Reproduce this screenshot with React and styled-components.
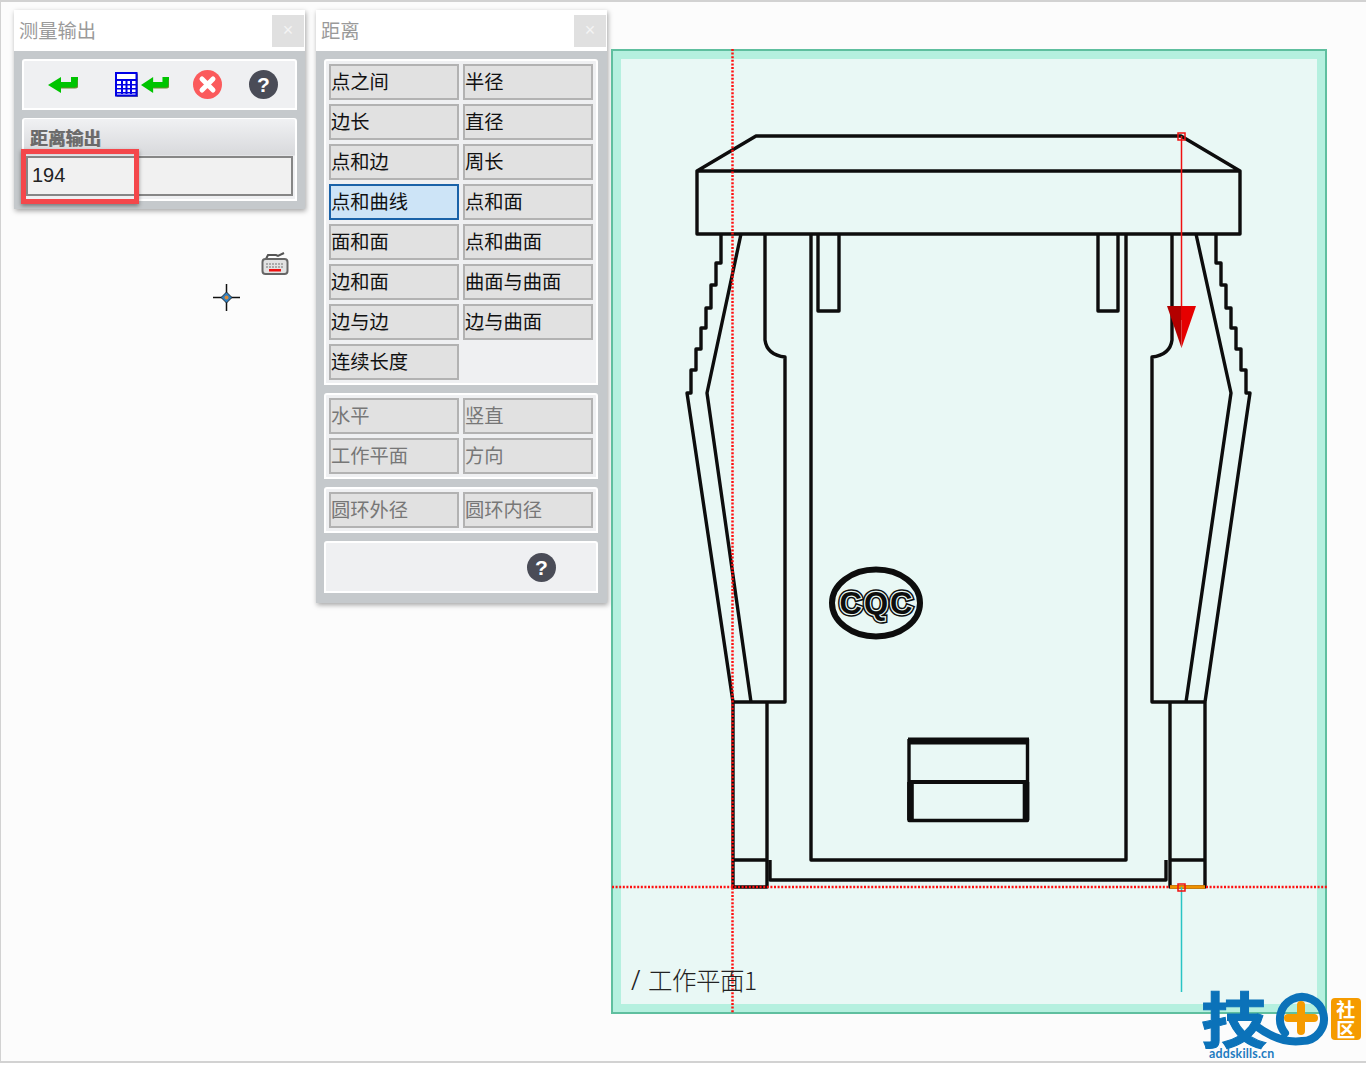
import React from "react";
import styled, { createGlobalStyle } from "styled-components";

const Global = createGlobalStyle`
  html, body { margin: 0; padding: 0; background: #fff; }
  body { font-family: "Noto Sans CJK SC", "Liberation Sans", sans-serif; }
  * { box-sizing: border-box; }
`;

const Page = styled.div`
  position: relative;
  width: 1366px;
  height: 1063px;
  background: #fcfcfc;
  border-top: 2px solid #d2d2d2;
  border-left: 1px solid #d2d2d2;
  border-bottom: 2px solid #d2d2d2;
  padding: 8px 0 0 13px;
  display: flex;
  align-items: flex-start;
  overflow: hidden;
`;
const Panel = styled.section`
  width: 291px;
  margin-right: ${(p) => p.$gap}px;
  background: #c5c9cc;
  box-shadow: 1px 2px 5px rgba(0, 0, 0, 0.35);
  position: relative;
`;
const PanelHeader = styled.header`
  height: 41px;
  background: #fff;
  display: flex;
  align-items: center;
  justify-content: space-between;
  padding: 0 1px 0 5px;
`;
const PanelTitle = styled.h2`
  margin: 0;
  font-size: 19.3px;
  line-height: 40px;
  height: 41px;
  font-weight: 400;
  color: #9a9a9a;
`;
const CloseButton = styled.button`
  width: 32px;
  height: 32px;
  border: 0;
  padding: 0;
  background: #e0e0e0;
  color: #f4f4f4;
  font: 400 18px "Liberation Sans", sans-serif;
`;
const PanelBody = styled.div`
  padding: 8px 8px ${(p) => p.$bottom || 8}px 8px;
  display: flex;
  flex-direction: column;
  gap: ${(p) => p.$gap || 8}px;
`;
const Card = styled.div`
  width: ${(p) => p.$width || 275}px;
  background: #eff0f2;
  border: 2px solid #fff;
  border-radius: 3px 3px 0 0;
`;
const ToolRow = styled(Card)`
  height: 51px;
  display: flex;
  align-items: center;
  padding-left: 24px;
`;
const ToolSlot = styled.span`
  display: flex;
  margin-right: ${(p) => p.$gap || 0}px;
`;
const GroupBox = styled(Card)`
  height: 83px;
  padding: 0 2px;
  border-top-width: 1px;
  background: linear-gradient(#f0f1f3 0, #d8d9dc 36px, #eff0f2 37px);
`;
const GroupTitle = styled.div`
  height: 37px;
  padding: 6px 0 0 4px;
  font-size: 17.8px;
  line-height: 24px;
  font-weight: 700;
  color: #6a6a6a;
  text-shadow: 0.6px 0 #8a8a8a;
`;
const ValueField = styled.div`
  height: 40px;
  width: 267px;
  border: 2px solid #868686;
  background: #f1f1f1;
  padding-left: 4px;
  font: 400 20px/34px "Liberation Sans", sans-serif;
  color: #222;
`;
const Highlight = styled.div`
  position: absolute;
  left: 7px;
  top: 139px;
  width: 118px;
  height: 55px;
  border: 5px solid #f4474b;
  box-shadow: 0 2px 4px rgba(0, 0, 0, 0.4);
`;
const ButtonGrid = styled(Card)`
  display: grid;
  grid-template-columns: 130px 130px;
  grid-auto-rows: 36px;
  gap: 4px;
  padding: 3px 0 2.5px 3px;
`;
const MeasureButton = styled.button`
  border: 2px solid ${(p) => (p.$active ? "#1a62a8" : "#b2b2b2")};
  background: ${(p) => (p.$active ? "#cde4f7" : "#e1e1e1")};
  color: ${(p) => (p.$disabled ? "#777" : "#111")};
  font: 400 19.3px/28px "Noto Sans CJK SC", sans-serif;
  text-align: left;
  padding: 0 0 2px 0;
  white-space: nowrap;
`;
const FooterCard = styled(Card)`
  height: 52px;
  display: flex;
  align-items: center;
  padding-left: 201px;
`;
const Canvas = styled.div`
  position: relative;
  margin-top: 39px;
  width: 716px;
  height: 965px;
  margin-left: -5px;
  border: 2px solid #5fbf9f;
  background: #b5f0df;
  padding: 8px 8px 8px 8px;
`;
const Viewport = styled.div`
  width: 100%;
  height: 100%;
  background: #e9f8f5;
`;
const Drawing = styled.svg`
  position: absolute;
  left: -2px;
  top: -2px;
  width: 716px;
  height: 965px;
`;
const CursorMark = styled.svg`
  position: absolute;
  left: 212px;
  top: 282px;
`;
const KeyboardMark = styled.svg`
  position: absolute;
  left: 259px;
  top: 247px;
`;
const Watermark = styled.div`
  position: absolute;
  left: 1199px;
  top: 984px;
  width: 165px;
  height: 76px;
`;
const LogoGlyph = styled.span`
  position: absolute;
  left: 1px;
  top: 3px;
  font: 700 60px/56px "Noto Sans CJK SC", sans-serif;
  color: #0b72b9;
  -webkit-text-stroke: 1px #0b72b9;
  transform: scaleX(1.1);
  transform-origin: left center;
`;
const LogoRing = styled.svg`
  position: absolute;
  left: 0;
  top: 0;
`;
const LogoBadge = styled.div`
  position: absolute;
  left: 131px;
  top: 12px;
  width: 29.5px;
  height: 42px;
  border-radius: 4px;
  background: #f59b00;
  color: #fff;
  font: 700 19px/20px "Noto Sans CJK SC", sans-serif;
  text-align: center;
  padding-top: 1px;
`;
const LogoUrl = styled.span`
  position: absolute;
  left: 9px;
  top: 61px;
  font: 700 12.4px/14px "Lato", "Liberation Sans", sans-serif;
  letter-spacing: 0.2px;
  color: #1e7bc0;
`;

const ReturnArrow = ({ width = 30 }) => (
  <svg width={width} height="18" viewBox="0 0 30 18" preserveAspectRatio="none">
    <path d="M0 9 L13 1 V6 H23 V1 H30 V9 Q30 12 27 12 H13 V17 Z" fill="#00c400" />
    <path d="M13 12 H27 Q30 12 30 9 V4" fill="none" stroke="#6f8a30" strokeWidth="1.2" />
  </svg>
);

const CalcIcon = () => (
  <svg width="23" height="25" viewBox="0 0 23 25">
    <rect x="1.500" y="1.500" width="21.500" height="23.500" fill="#777" />
    <rect x="1" y="1" width="20.500" height="22.500" fill="#fff" stroke="#0000e6" strokeWidth="2" />
    <g fill="#0000e6">
      <rect x="1" y="7" width="20" height="2" />
      <rect x="1" y="12" width="20" height="1.500" />
      <rect x="1" y="16" width="20" height="1.500" />
      <rect x="1" y="20" width="20" height="1.500" />
      <rect x="6" y="8" width="2" height="14" />
      <rect x="10.500" y="8" width="2" height="14" />
      <rect x="15" y="8" width="2" height="14" />
    </g>
  </svg>
);

const ErrorIcon = () => (
  <svg width="29" height="29" viewBox="0 0 29 29">
    <circle cx="14.500" cy="14.500" r="14.500" fill="#fb5a5c" />
    <path d="M9 9 L20 20 M20 9 L9 20" stroke="#fff" strokeWidth="5" strokeLinecap="round" />
  </svg>
);

const HelpIcon = () => (
  <svg width="29" height="29" viewBox="0 0 29 29">
    <circle cx="14.500" cy="14.500" r="14.500" fill="#4a4c57" />
    <text x="14.500" y="22" textAnchor="middle" fontFamily="Liberation Sans" fontWeight="700" fontSize="21" fill="#fff">?</text>
  </svg>
);

const firstGroup = [
  ["点之间"], ["半径"], ["边长"], ["直径"], ["点和边"], ["周长"],
  ["点和曲线", true], ["点和面"], ["面和面"], ["点和曲面"], ["边和面"], ["曲面与曲面"],
  ["边与边"], ["边与曲面"], ["连续长度"],
];
const secondGroup = ["水平", "竖直", "工作平面", "方向"];
const thirdGroup = ["圆环外径", "圆环内径"];

const INK = { fill: "none", stroke: "#0d0d0d", strokeWidth: 3.4, strokeLinejoin: "round" };

const CadDrawing = () => (
  <Drawing viewBox="611 49 716 965">
    <defs>
      <text id="cqc-mark" x="877" y="614" textAnchor="middle" fontFamily="Liberation Sans" fontWeight="700" fontSize="31" letterSpacing="2">CQC</text>
    </defs>
    <g {...INK}>
      <path d="M697 171 L756 136 H1181 L1240 171 V234 H697 Z M697 171 H1240" />
      <path d="M721 234 V263 H716 V285 H711 V308 H706 V328 H701 V349 H696 V370 H691 V393 H687 L733 702" />
      <path d="M741 234 L707 393 L751 702" />
      <path d="M765 234 V340 Q767 355 785 357 V702 H733" />
      <path d="M811 234 V860 H1126 V234" />
      <path d="M818 234 V311 H839 V234" />
      <path d="M1098 234 V311 H1118 V234" />
      <path d="M1172 234 V340 Q1170 355 1152 357 V702 H1205" />
      <path d="M1196 234 L1231 393 L1186 702" />
      <path d="M1216 234 V263 H1221 V285 H1226 V308 H1231 V328 H1236 V349 H1241 V370 H1246 V393 H1250 L1205 702" />
      <path d="M733 702 V887 H767 V702 M733 860 H767" />
      <path d="M1170 702 V887 H1205 V702 M1170 860 H1205" />
      <path d="M770 860 V880 H1166 V860" />
      <path d="M909 739 V820.500 H1027.500 V739" />
      <path d="M908 741 H1029" strokeWidth="7" />
      <path d="M910.500 782 V820 M1026 782 V820" strokeWidth="6.600" />
      <path d="M909 782 H1027" strokeWidth="4" />
    </g>
    <ellipse cx="876" cy="603" rx="44" ry="33.500" fill="none" stroke="#0d0d0d" strokeWidth="6" />
    <use href="#cqc-mark" fill="#0d0d0d" stroke="#0d0d0d" strokeWidth="5.500" />
    <use href="#cqc-mark" fill="#e9f8f5" stroke="#e9f8f5" strokeWidth="2.500" />
    <use href="#cqc-mark" fill="#0d0d0d" />
    <path d="M612 887 H1327" stroke="#ff1010" strokeWidth="2.500" strokeDasharray="2 1.600" />
    <path d="M732.500 49 V1013" stroke="#ff1010" strokeWidth="2.500" strokeDasharray="2 1.600" />
    <path d="M1170 887 H1205" stroke="#ee9200" strokeWidth="3.500" />
    <path d="M1181.500 887 V992" stroke="#28c4c4" strokeWidth="1.500" />
    <path d="M1181.500 136 V320" stroke="#f01010" strokeWidth="1.500" />
    <path d="M1167 306 H1181.500 V348 Z" fill="#b30000" />
    <path d="M1196 306 H1181.500 V348 Z" fill="#e60000" />
    <rect x="1178" y="133" width="7" height="7" fill="none" stroke="#f01010" strokeWidth="1.500" />
    <rect x="1178" y="884" width="7" height="7" fill="none" stroke="#f01010" strokeWidth="1.500" />
    <text x="631" y="990" fontFamily="Noto Sans" fontWeight="300" fontSize="27" fill="#222">/</text>
    <text x="648" y="990" fontFamily="Noto Sans CJK SC" fontSize="24.500" fontWeight="300" letterSpacing="-0.5" fill="#222">工作平面1</text>
  </Drawing>
);

const Logo = () => (
  <Watermark>
    <LogoGlyph>技</LogoGlyph>
    <LogoRing width="165" height="76" viewBox="0 0 165 76">
      <path d="M85 47 A22 22 0 1 1 102 55 Q80 58 56 40" fill="none" stroke="#0b72b9" strokeWidth="8" strokeLinecap="round" />
      <path d="M88 32 H114 M101 19 V45" fill="none" stroke="#f59b00" strokeWidth="8" strokeLinecap="round" />
    </LogoRing>
    <LogoBadge>社<br />区</LogoBadge>
    <LogoUrl>addskills.cn</LogoUrl>
  </Watermark>
);

export default function App() {
  return (
    <>
      <Global />
      <Page>
        <Panel $gap={11}>
          <PanelHeader>
            <PanelTitle>测量输出</PanelTitle>
            <CloseButton>×</CloseButton>
          </PanelHeader>
          <PanelBody>
            <ToolRow>
              <ToolSlot $gap={37}><ReturnArrow /></ToolSlot>
              <ToolSlot $gap={3}><CalcIcon /></ToolSlot>
              <ToolSlot $gap={24}><ReturnArrow width={28} /></ToolSlot>
              <ToolSlot $gap={27}><ErrorIcon /></ToolSlot>
              <ToolSlot><HelpIcon /></ToolSlot>
            </ToolRow>
            <GroupBox>
              <GroupTitle>距离输出</GroupTitle>
              <ValueField>194</ValueField>
            </GroupBox>
          </PanelBody>
          <Highlight />
        </Panel>
        <Panel $gap={9}>
          <PanelHeader>
            <PanelTitle>距离</PanelTitle>
            <CloseButton>×</CloseButton>
          </PanelHeader>
          <PanelBody $gap={8.5} $bottom={10}>
            <ButtonGrid $width={274}>
              {firstGroup.map(([label, active]) => (
                <MeasureButton key={label} $active={active}>{label}</MeasureButton>
              ))}
            </ButtonGrid>
            <ButtonGrid $width={274}>
              {secondGroup.map((label) => (
                <MeasureButton key={label} $disabled>{label}</MeasureButton>
              ))}
            </ButtonGrid>
            <ButtonGrid $width={274}>
              {thirdGroup.map((label) => (
                <MeasureButton key={label} $disabled>{label}</MeasureButton>
              ))}
            </ButtonGrid>
            <FooterCard $width={274}><HelpIcon /></FooterCard>
          </PanelBody>
        </Panel>
        <Canvas>
          <Viewport />
          <CadDrawing />
        </Canvas>
        <CursorMark width="28" height="28" viewBox="0 0 28 28">
          <path d="M13.500 0 V27 M0 13.500 H27" stroke="#111" strokeWidth="1.500" />
          <path d="M13.500 8 L19 13.500 L13.500 19 L8 13.500 Z" fill="#2f7fc0" stroke="#111" strokeWidth="0.800" />
          <circle cx="13.500" cy="13.500" r="2" fill="#d98a3a" />
        </CursorMark>
        <KeyboardMark width="30" height="28" viewBox="0 0 30 28">
          <path d="M6 10 L8 6 H16 L18 7 L24 4" fill="none" stroke="#555" strokeWidth="2" />
          <rect x="2.500" y="10" width="25" height="15" rx="3" fill="#e2e2e2" stroke="#666" strokeWidth="2" />
          <path d="M6 15 H24 M6 18 H24" stroke="#999" strokeWidth="1.500" strokeDasharray="2 1" />
          <rect x="9" y="20" width="12" height="2.500" fill="#f01010" />
        </KeyboardMark>
        <Logo />
      </Page>
    </>
  );
}
